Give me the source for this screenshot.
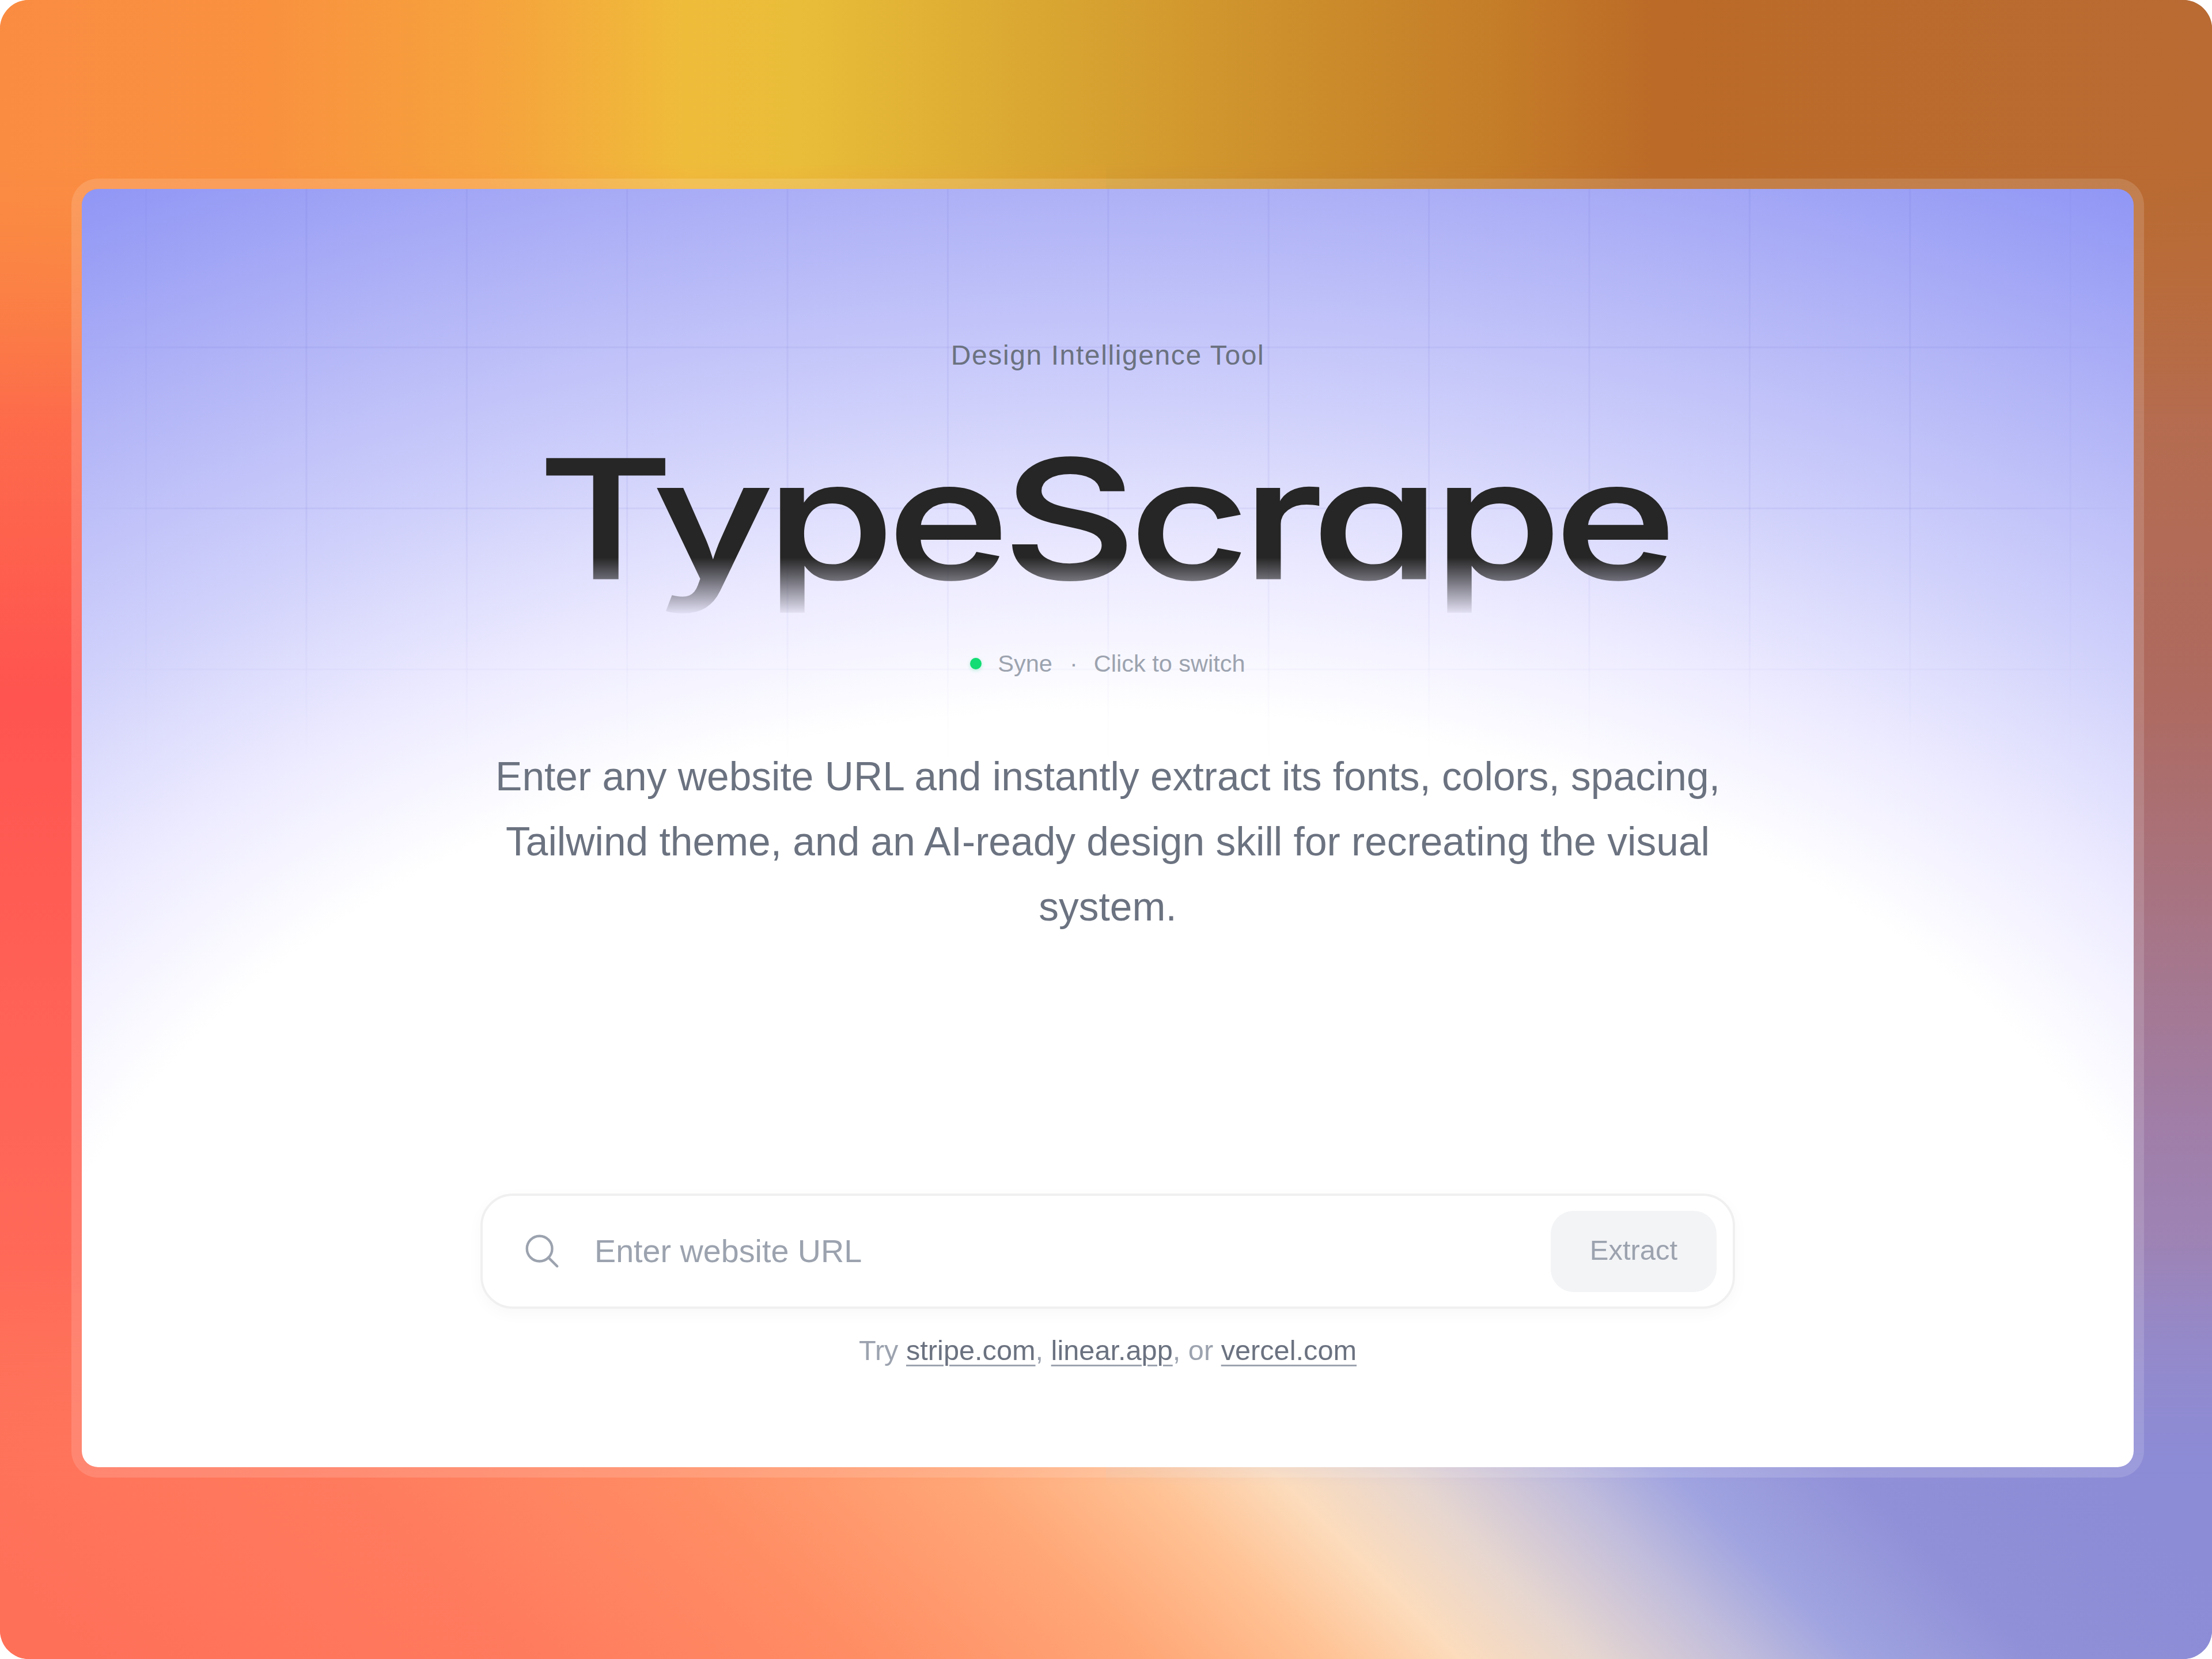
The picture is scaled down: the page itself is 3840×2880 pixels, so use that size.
<script>
	const examples = ['stripe.com', 'linear.app', 'vercel.com'];
</script>

<div class="frame">
	<main class="card">
		<div class="grid-lines"></div>

		<p class="eyebrow">Design Intelligence Tool</p>
		<h1 class="title"><span>TypeScrape</span></h1>

		<div class="font-status">
			<i class="dot"></i>
			<span>Syne</span>
			<span class="sep">·</span>
			<span>Click to switch</span>
		</div>

		<p class="lead">
			Enter any website URL and instantly extract its fonts, colors, spacing, Tailwind theme, and an AI-ready design skill for recreating the visual system.
		</p>

		<div class="bottom">
			<form class="search" onsubmit={(e) => e.preventDefault()}>
				<svg class="icon" viewBox="0 0 24 24" fill="none" stroke="currentColor" stroke-width="1.5" stroke-linecap="round" stroke-linejoin="round">
					<circle cx="10.5" cy="10.5" r="7.5" />
					<path d="m21 21-5.2-5.2" />
				</svg>
				<input type="text" placeholder="Enter website URL" />
				<button type="submit" disabled>Extract</button>
			</form>
			<p class="hint">
				Try <a href="#stripe">{examples[0]}</a>, <a href="#linear">{examples[1]}</a>, or <a href="#vercel">{examples[2]}</a>
			</p>
		</div>
	</main>
</div>

<style>
	:global(body) {
		margin: 0;
		background: #fff;
	}
	.frame {
		position: relative;
		overflow: hidden;
		box-sizing: border-box;
		width: 3840px;
		height: 2880px;
		padding: 328px 136px 333px 142px;
		border-radius: 50px;
		font-family: "Liberation Sans", Arial, sans-serif;
		background:
			linear-gradient(180deg, #fa8c42 0%, #fc7a48 15%, #ff5450 42%, #ff6156 60%, #ff7059 90%) left / 50% 100% no-repeat,
			linear-gradient(180deg, #b5673a 0%, #b96d45 15%, #ae6a60 42%, #a07ea8 68%, #9a8bc8 85%, #8c8cd8 100%) right / 50% 100% no-repeat;
	}
	/* colour bands behind the card, top and bottom */
	.frame::before,
	.frame::after {
		content: "";
		position: absolute;
		left: 0;
		right: 0;
		height: 720px;
	}
	.frame::before {
		top: 0;
		background: linear-gradient(90deg, #fa8c42 0%, #f9913f 12%, #f6a23d 22%, #efbc3a 31%, #e9bd39 36%, #dcab33 45%, #cd8f2c 58%, #c47c28 68%, #bb6a27 75%, #b96b33 100%);
		mask-image: linear-gradient(180deg, #000 0, #000 280px, transparent 720px);
	}
	.frame::after {
		bottom: 0;
		background: linear-gradient(45deg, #ff7059 3.4%, #ff7b5e 20.2%, #ff8d64 32.8%, #ffa777 43.8%, #ffc294 50.5%, #fcdcbc 55.6%, #e6d6d0 60.6%, #c0bcdc 66.5%, #a0a4e0 70.7%, #9090d8 77.5%, #8b8bd6 87.6%);
		mask-image: linear-gradient(0deg, #000 0, #000 300px, transparent 720px);
	}
	.card {
		position: relative;
		z-index: 1;
		box-sizing: border-box;
		height: 100%;
		padding-top: 260px;
		display: flex;
		flex-direction: column;
		align-items: center;
		border-radius: 28px;
		box-shadow: 0 0 0 18px rgba(255, 255, 255, 0.14);
		background: radial-gradient(
			ellipse 3694px 2530px at 50% 100%,
			#fff 0%,
			#fff 52%,
			#eceaff 62%,
			#cfd0fb 73%,
			#aeb1f6 87.6%,
			#9096f5 100%
		);
	}
	.grid-lines {
		position: absolute;
		inset: 0;
		border-radius: 28px;
		pointer-events: none;
		background-image:
			linear-gradient(90deg, rgba(80, 80, 200, 0.07) 3px, transparent 3px),
			linear-gradient(180deg, rgba(80, 80, 200, 0.07) 3px, transparent 3px);
		background-size: 278.4px 279.5px;
		background-position: 110px -6px;
		mask-image:
			linear-gradient(180deg, #000 0, #000 560px, transparent 1000px),
			linear-gradient(90deg, transparent 0, #000 6%, #000 94%, transparent 100%);
		mask-composite: intersect;
	}
	.eyebrow,
	.title,
	.font-status,
	.lead,
	.bottom {
		position: relative;
	}
	.eyebrow {
		margin: 0;
		font-size: 48px;
		line-height: 58px;
		letter-spacing: 1.6px;
		color: #6b7280;
	}
	.title {
		margin: 75px 0 0;
		height: 360px;
		line-height: 360px;
		font-family: Inter, "Liberation Sans", sans-serif;
		font-feature-settings: "cv11" 1;
		font-size: 285px;
		font-weight: 500;
		letter-spacing: -9px;
		color: #262626;
		-webkit-text-stroke: 3px #262626;
	}
	.title span {
		display: inline-block;
		transform: translateX(-7px) scaleX(1.26);
		mask-image: linear-gradient(180deg, #000 247px, transparent 349px);
	}
	.font-status {
		margin-top: 45px;
		display: flex;
		align-items: center;
		gap: 30px;
		height: 52px;
		font-size: 41.5px;
		color: #9ca3af;
	}
	.dot {
		width: 20px;
		height: 20px;
		margin-right: -2px;
		border-radius: 50%;
		background: #12dc73;
		box-shadow: 0 2px 6px rgba(18, 220, 115, 0.3);
	}
	.sep {
		margin-right: -2px;
	}
	.lead {
		margin: 114px 0 0;
		width: 2240px;
		text-align: center;
		font-size: 69.5px;
		line-height: 113px;
		color: #6b7280;
	}
	.bottom {
		margin-top: auto;
		padding-bottom: 173px;
		display: flex;
		flex-direction: column;
		align-items: center;
		gap: 42px;
	}
	.search {
		box-sizing: border-box;
		width: 2178px;
		height: 200px;
		padding: 0 28px 0 68px;
		display: flex;
		align-items: center;
		gap: 56px;
		background: #fff;
		border: 4px solid #f0f0f1;
		border-radius: 56px;
		box-shadow: 0 8px 28px rgba(0, 0, 0, 0.03);
	}
	.icon {
		flex: none;
		width: 70px;
		height: 70px;
		color: #9ca3af;
	}
	.search input {
		flex: 1;
		min-width: 0;
		padding: 0;
		border: 0;
		outline: 0;
		background: none;
		font: inherit;
		font-size: 55.7px;
		color: #374151;
	}
	.search input::placeholder {
		color: #9ca3af;
		opacity: 1;
	}
	.search button {
		flex: none;
		width: 288px;
		height: 141px;
		padding: 0 0 4px;
		border: 0;
		border-radius: 40px;
		background: #f3f4f6;
		font: inherit;
		font-size: 49px;
		color: #9ca3af;
	}
	.hint {
		margin: 0;
		font-size: 48.7px;
		line-height: 60px;
		color: #9ca3af;
	}
	.hint a {
		color: #6b7280;
		text-decoration: underline;
		text-underline-offset: 8px;
		text-decoration-thickness: 3px;
		text-decoration-color: #9ca3af;
	}
</style>
